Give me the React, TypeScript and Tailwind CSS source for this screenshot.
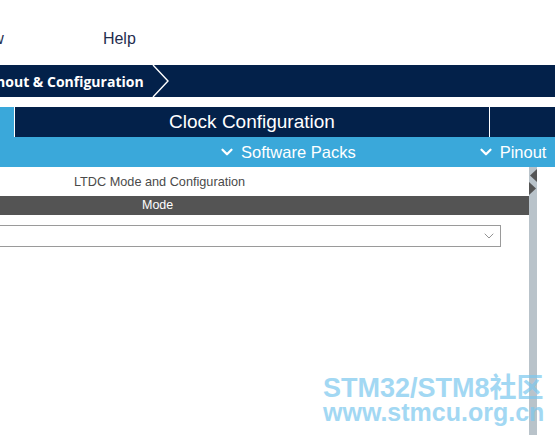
import { ChevronDown } from 'lucide-react';

const NAVY = 'bg-[#03214a]';

function MenuBar() {
  return (
    <div className="h-[65px] flex items-start pt-[30px] text-[16px] leading-[18px] text-[#1f2d4e] whitespace-nowrap">
      <span className="ml-[-53px]">Window</span>
      <span className="ml-[99px]">Help</span>
    </div>
  );
}

function Breadcrumb() {
  return (
    <div className={`h-[32px] ${NAVY} flex items-center whitespace-nowrap relative`}>
      <span className="ml-[-17px] text-white font-bold text-[14px] font-['Open_Sans','Liberation_Sans',sans-serif]">
        Pinout &amp; Configuration
      </span>
      <svg className="absolute left-[152px] top-0" width="18" height="32" viewBox="0 0 18 32">
        <path d="M1 0 L16 16 L1 32" fill="none" stroke="white" strokeWidth="1.4" />
      </svg>
    </div>
  );
}

function Tabs() {
  return (
    <div className="mt-[10px] h-[30px] flex">
      <div className="w-[14px] bg-[#3aa8da]" />
      <div className="w-[1px] bg-white" />
      <div className={`w-[474px] ${NAVY} flex items-center justify-center text-white text-[19px]`}>
        Clock Configuration
      </div>
      <div className="w-[1px] bg-white" />
      <div className={`flex-1 ${NAVY}`} />
    </div>
  );
}

function SubBar() {
  return (
    <div className="h-[30px] bg-[#3aa8da] flex items-center text-white text-[16.5px] whitespace-nowrap">
      <span className="ml-[218px] flex items-center gap-[5px]">
        <ChevronDown size={18} strokeWidth={3} />
        Software Packs
      </span>
      <span className="ml-[121px] flex items-center gap-[5px]">
        <ChevronDown size={18} strokeWidth={3} />
        Pinout
      </span>
    </div>
  );
}

function ModePanel() {
  return (
    <div className="w-[529px]">
      <div className="pt-[8px] h-[29px] text-[12.7px] leading-[15px] text-[#4a4a4a] pl-[74px]">
        LTDC Mode and Configuration
      </div>
      <div className="h-[19px] bg-[#545454] text-white text-[12.5px] leading-[19px] pl-[142px]">
        Mode
      </div>
      <div className="mt-[10px] w-[501px] h-[22px] border border-l-0 border-[#9a9a9a] flex items-center justify-end pr-[3px]">
        <ChevronDown size={16} strokeWidth={1.2} className="text-[#777]" />
      </div>
    </div>
  );
}

function Scrollbar() {
  return (
    <div className="w-[8px] bg-[#b9c3ca] flex flex-col items-center pt-[2px]">
      <svg width="8" height="26" viewBox="0 0 8 26">
        <path d="M8 0 L1 6.5 L8 13 Z" fill="#555" />
        <path d="M0 13 L7 19.5 L0 26 Z" fill="#555" />
      </svg>
    </div>
  );
}

export default function App() {
  return (
    <div className="w-[555px] h-[435px] bg-white overflow-hidden relative font-['Liberation_Sans',Arial,sans-serif]">
      <MenuBar />
      <Breadcrumb />
      <Tabs />
      <SubBar />
      <div className="flex h-[268px]">
        <ModePanel />
        <Scrollbar />
        <div className="flex-1" />
      </div>

      {/* forum watermark */}
      <div className="absolute left-[323px] top-[376px] font-bold leading-[24px] text-[#7cc8ee] opacity-70 whitespace-nowrap font-['Liberation_Sans','Noto_Sans_CJK_SC',sans-serif]">
        <div className="text-[27px]">STM32/STM8社区</div>
        <div className="text-[25px]">www.stmcu.org.cn</div>
      </div>
    </div>
  );
}
